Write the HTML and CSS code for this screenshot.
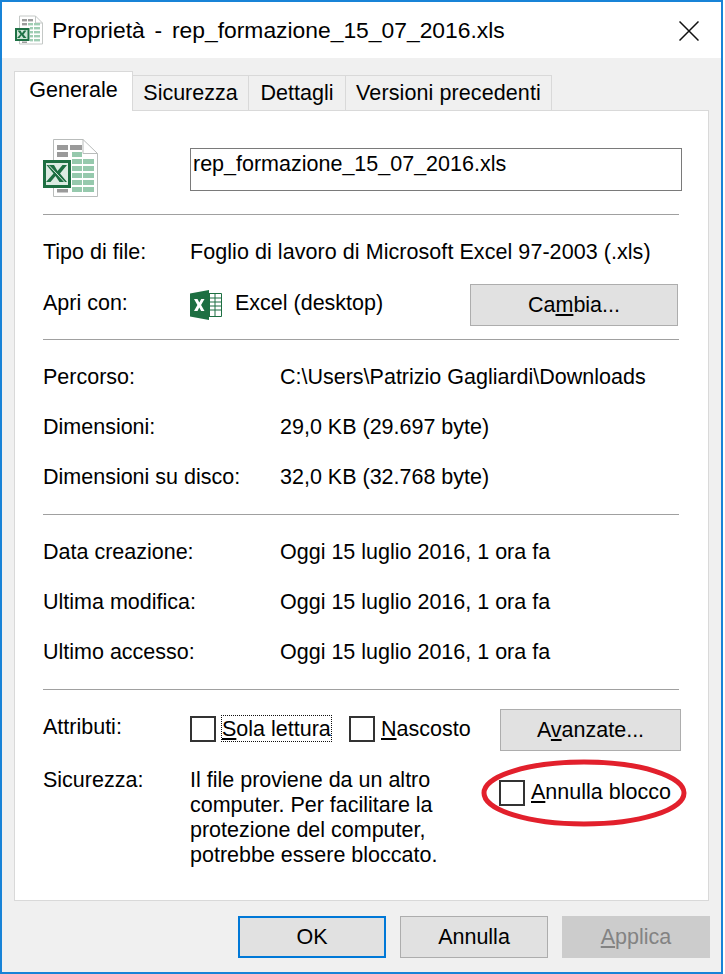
FILE: index.html
```html
<!DOCTYPE html>
<html lang="it">
<head>
<meta charset="utf-8">
<title>Proprietà</title>
<link rel="stylesheet" href="styles.css">
</head>
<body>
<div class="window">
  <header class="titlebar">
    <svg class="title-icon" viewBox="0 0 30 30" width="30" height="30">
      <path d="M5.5 1h16l7 7v21h-23z" fill="#fff" stroke="#c4c8c6"/>
      <path d="M21.5 1v7h7" fill="none" stroke="#c4c8c6"/>
      <rect x="8" y="4" width="5" height="2.4" fill="#9c9c9c"/><rect x="14" y="4" width="5" height="2.4" fill="#9c9c9c"/>
      <rect x="8" y="8" width="5" height="2.4" fill="#9c9c9c"/><rect x="14" y="8" width="5" height="2.4" fill="#9fcdb3"/><rect x="20" y="8" width="6" height="2.4" fill="#9fcdb3"/>
      <g fill="#9fcdb3"><rect x="20" y="12" width="6" height="2.4"/><rect x="20" y="16" width="6" height="2.4"/><rect x="20" y="20" width="6" height="2.4"/><rect x="20" y="24" width="6" height="2.4"/><rect x="16" y="12" width="3" height="2.4"/><rect x="16" y="16" width="3" height="2.4"/><rect x="16" y="20" width="3" height="2.4"/><rect x="16" y="24" width="3" height="2.4"/></g>
      <rect x="8" y="26.500" width="5" height="1.500" fill="#9c9c9c"/>
      <rect x="1" y="13" width="14.500" height="13" fill="#1e7145"/>
      <rect x="3" y="15" width="10.500" height="9" fill="#cfe6d7"/>
      <path d="M3.500 15.500h3l1.500 2.700 2-2.700h2.500l-3 4 3 3.500h-3l-2-2.700-2 2.700H3l3.500-3.800z" fill="#1e7145"/>
    </svg>
    <h1 class="title">Proprietà - rep_formazione_15_07_2016.xls</h1>
    <svg class="close" viewBox="0 0 20 20" width="20" height="20"><path d="M0.500 0.500L19.500 19.500M19.500 0.500L0.500 19.500" stroke="#111" stroke-width="1.500" fill="none"/></svg>
  </header>

  <main class="body">
    <nav class="tabs">
      <span class="tab tab-active t1">Generale</span>
      <span class="tab t2">Sicurezza</span>
      <span class="tab t3">Dettagli</span>
      <span class="tab t4">Versioni precedenti</span>
    </nav>

    <section class="panel">
      <div class="row-file">
        <svg class="file-icon" viewBox="0 0 56 58" width="56" height="58">
          <path d="M10.500 0.500h29.500l14.500 14v43h-44z" fill="#fff" stroke="#b9bcbb"/>
          <path d="M40 0.500v14h14.500" fill="none" stroke="#b9bcbb"/>
          <g fill="#9a9a9a"><rect x="14" y="6" width="11" height="5"/><rect x="27" y="6" width="12" height="5"/><rect x="14" y="13" width="11" height="5"/><rect x="14" y="50" width="11" height="3.500"/></g>
          <g fill="#96c9ad"><rect x="29" y="13" width="10" height="5"/><rect x="29" y="20" width="10" height="5"/><rect x="40" y="20" width="11" height="5"/><rect x="29" y="27" width="10" height="5"/><rect x="40" y="27" width="11" height="5"/><rect x="29" y="34" width="10" height="5"/><rect x="40" y="34" width="11" height="5"/><rect x="29" y="41" width="10" height="5"/><rect x="40" y="41" width="11" height="5"/><rect x="29" y="48" width="10" height="5"/><rect x="40" y="48" width="11" height="5"/></g>
          <rect x="0" y="21" width="28" height="28" fill="#1d6f42"/>
          <rect x="3" y="24" width="22" height="22" fill="#dcebe2"/>
          <path d="M3.500 26h7.500l3.500 6 5-6h4.500l-7 8.500 7 8.500h-7.500l-4-6-5 6H3l7.500-8.500z" fill="#1d6f42"/>
          <path d="M6 26.500l16 17" stroke="#dcebe2" stroke-width="1"/>
        </svg>
        <div class="name-box">rep_formazione_15_07_2016.xls</div>
      </div>
      <hr class="divider d1">

      <div class="row row-type"><span class="label l-short">Tipo di file:</span><span class="type-value">Foglio di lavoro di Microsoft Excel 97-2003 (.xls)</span></div>
      <div class="row-open">
        <span class="label l-short">Apri con:</span>
        <svg class="excel-icon" viewBox="0 0 32 30" width="32" height="30">
          <path d="M11 3.500h20.500v23H11z" fill="#fff" stroke="#1d6f42"/>
          <path d="M19.500 3.500v23M25 3.500v23M19.500 8h12M19.500 12h12M19.500 16h12M19.500 20h12" stroke="#1d6f42" stroke-width="1"/>
          <path d="M0 3.500L19 0v30L0 26.500z" fill="#1d6f42"/>
          <path d="M4 9h3.500l1.800 3.500L11.200 9h3.300l-3.400 6 3.400 6h-3.400l-1.800-3.500L7.500 21H4l3.400-6z" fill="#fff"/>
        </svg>
        <span class="app-name">Excel (desktop)</span>
        <button class="btn btn-change" type="button">Ca<u>m</u>bia...</button>
      </div>
      <hr class="divider d2">

      <div class="kv first"><span class="label">Percorso:</span><span>C:\Users\Patrizio Gagliardi\Downloads</span></div>
      <div class="kv"><span class="label">Dimensioni:</span><span>29,0 KB (29.697 byte)</span></div>
      <div class="kv"><span class="label">Dimensioni su disco:</span><span>32,0 KB (32.768 byte)</span></div>
      <hr class="divider d3">

      <div class="kv first"><span class="label">Data creazione:</span><span>Oggi 15 luglio 2016, 1 ora fa</span></div>
      <div class="kv"><span class="label">Ultima modifica:</span><span>Oggi 15 luglio 2016, 1 ora fa</span></div>
      <div class="kv"><span class="label">Ultimo accesso:</span><span>Oggi 15 luglio 2016, 1 ora fa</span></div>
      <hr class="divider d4">

      <div class="row-attr">
        <span class="label l-short attr-label">Attributi:</span>
        <span class="check"></span>
        <span class="check-text focused"><u>S</u>ola lettura</span>
        <span class="check check-2"></span>
        <span class="check-text hidden-text"><u>N</u>ascosto</span>
        <button class="btn btn-adv" type="button">A<u>v</u>anzate...</button>
      </div>
      <div class="row-sec">
        <span class="label l-short">Sicurezza:</span>
        <p class="sec-text">Il file proviene da un altro<br>computer. Per facilitare la<br>protezione del computer,<br>potrebbe essere bloccato.</p>
        <div class="unblock">
          <span class="check"></span>
          <span class="check-text unblock-text"><u>A</u>nnulla blocco</span>
          <svg class="ring" viewBox="0 0 206 68" width="206" height="68"><ellipse cx="103" cy="34" rx="100" ry="31" fill="none" stroke="#e2202c" stroke-width="5"/></svg>
        </div>
      </div>
    </section>

    <footer class="actions">
      <button class="btn btn-foot btn-ok" type="button">OK</button>
      <button class="btn btn-foot" type="button">Annulla</button>
      <button class="btn btn-foot btn-off" type="button"><u>A</u>pplica</button>
    </footer>
  </main>
</div>
</body>
</html>
```
FILE: styles.css
```css
* { box-sizing: border-box; }
html, body { margin: 0; padding: 0; background: #fff; }
body { width: 725px; height: 974px; overflow: hidden; font-family: "Liberation Sans", Arial, sans-serif; font-size: 21.5px; color: #000; }

.window { width: 723px; height: 974px; border: 2px solid #1883d7; display: flex; flex-direction: column; background: #f0f0f0; }

.titlebar { height: 56px; background: #fff; display: flex; align-items: center; padding: 0 0 0 12px; flex: none; }
.title-icon { flex: none; margin-top: -1px; }
.title { margin: 0 0 0 8px; font-weight: 400; font-size: 22.85px; word-spacing: 3.5px; line-height: 56px; flex: 1; white-space: nowrap; }
.close { flex: none; margin-right: 22px; margin-top: 2px; }

.body { flex: 1; display: flex; flex-direction: column; padding: 13px 0 0 12px; }

.tabs { display: flex; align-items: flex-end; height: 39px; position: relative; z-index: 1; }
.tab { height: 35px; line-height: 34px; text-align: center; background: #f0f0f0; border: 1px solid #d9d9d9; border-left: 0; border-bottom: 0; white-space: nowrap; }
.t1 { width: 119px; }
.t2 { width: 116px; }
.t3 { width: 97px; }
.t4 { width: 206px; letter-spacing: 0.1px; }
.tab-active { height: 40px; margin-bottom: -1px; background: #fff; border-left: 1px solid #d9d9d9; line-height: 37px; }

.panel { width: 695px; height: 791px; background: #fff; border: 1px solid #d9d9d9; padding: 0 0 0 28px; flex: none; }

.row-file { display: flex; height: 87px; padding-top: 28px; }
.file-icon { flex: none; }
.name-box { margin: 9px 0 0 91px; width: 492px; height: 43px; border: 1px solid #7a7a7a; padding: 0 2px; line-height: 30px; }

.divider { margin: 0; border: 0; height: 1px; background: #a0a0a0; width: 636px; }
.d1 { margin-top: 16px; }

.label { flex: none; display: block; width: 237px; }
.l-short { width: 147px; }

.row { display: flex; line-height: 24px; }
.row-type { margin-top: 25px; }
.type-value { letter-spacing: 0.06px; }
.row-open { display: flex; align-items: center; height: 42px; margin-top: 20px; position: relative; }
.excel-icon { flex: none; margin-right: 13px; }
.app-name { flex: 1; margin-top: -4px; }
.row-open .label { margin-top: -4px; }

.btn { font: inherit; color: #000; background: #e1e1e1; border: 1px solid #adadad; padding: 0; height: 42px; }
.btn-change { width: 208px; margin-right: 30px; }
.d2 { margin-top: 13px; }

.kv { display: flex; height: 50px; align-items: center; }
.kv.first { margin-top: 12px; }
.d3 { margin-top: 12px; }
.d4 { margin-top: 12px; }

.row-attr { display: flex; align-items: flex-start; margin-top: 19px; height: 42px; }
.attr-label { line-height: 24px; margin-top: 6px; }
.check { flex: none; width: 26px; height: 26px; border: 2px solid #333; background: #fff; margin-top: 7px; }
.check-text { white-space: nowrap; line-height: 24px; }
.focused { margin: 6px 0 0 5px; padding: 0; height: 27px; border: 1px dotted #111; width: 111px; line-height: 27px; }
.check-2 { margin-left: 17px; }
.hidden-text { margin: 8px 0 0 6px; width: 119px; }
.btn-adv { width: 181px; margin-left: 0; }

.row-sec { display: flex; margin-top: 17px; align-items: flex-start; }
.row-sec .label { line-height: 25px; }
.sec-text { margin: 0; line-height: 25px; width: 309px; flex: none; }
.unblock { position: relative; display: flex; align-items: flex-start; margin-top: 12px; }
.unblock-text { margin-left: 6px; line-height: 25px; }
.unblock .check { margin-top: 0; }
.ring { position: absolute; left: -18px; top: -21px; pointer-events: none; }

.actions { display: flex; gap: 14px; padding: 15px 0 0 224px; }
.btn-foot { width: 148px; }
.btn-ok { border: 2px solid #0078d7; }
.btn-off { background: #ccc; border-color: #ccc; color: #838383; }
```
